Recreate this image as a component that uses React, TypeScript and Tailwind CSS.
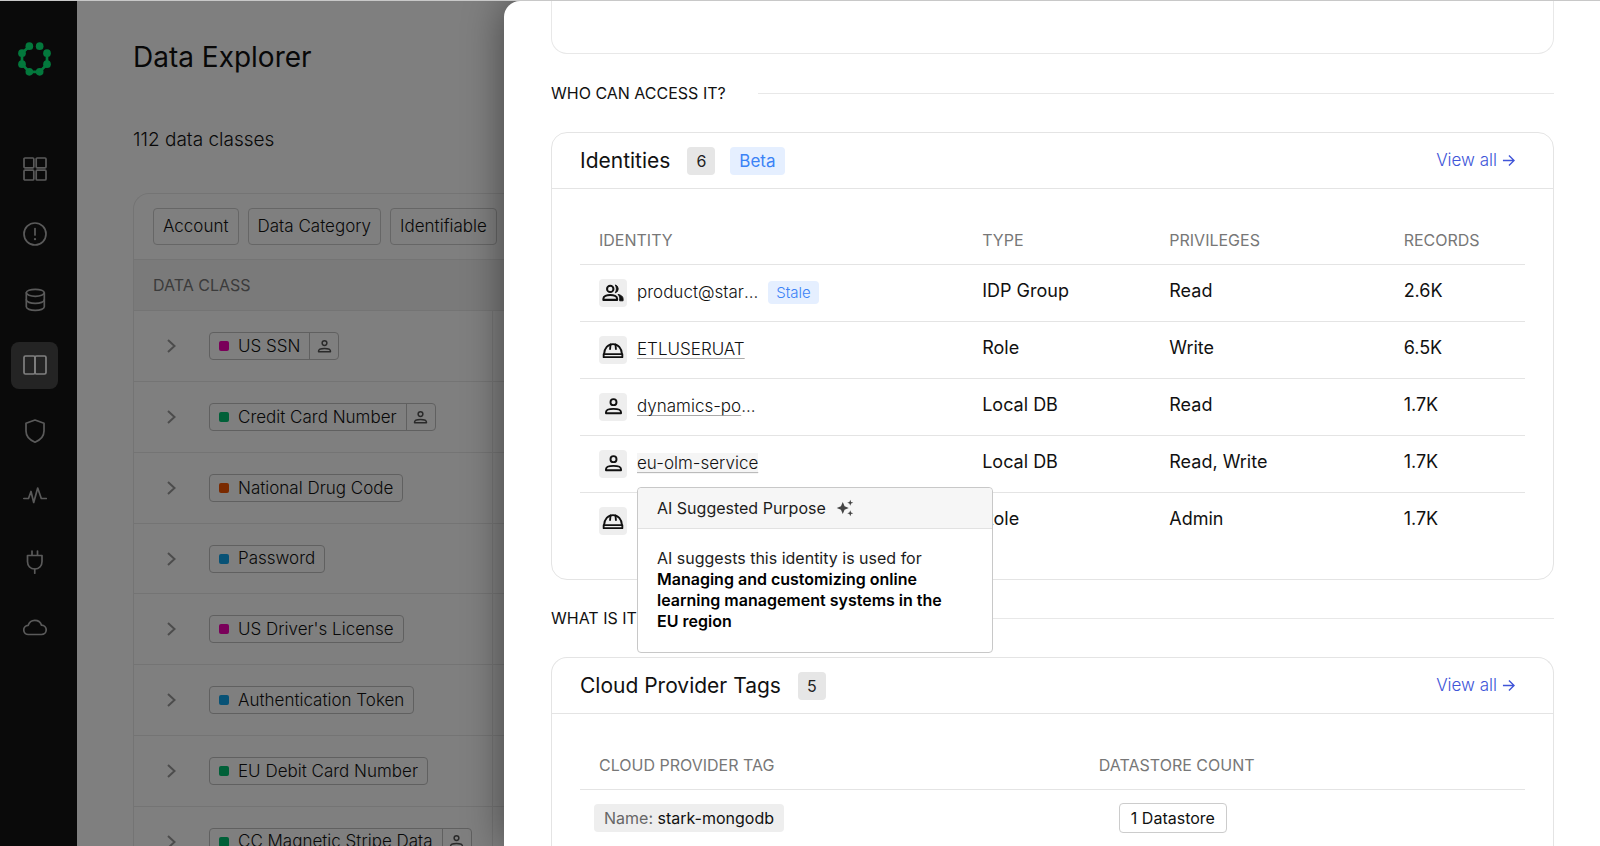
import type { ReactNode } from 'react';

type IdentityKind = 'group' | 'role' | 'user';

interface DataClass {
  name: string;
  color: string;
  personal?: boolean;
}

interface Identity {
  kind: IdentityKind;
  name?: string;
  truncated?: boolean;
  stale?: boolean;
  plain?: boolean;
  active?: boolean;
  type: string;
  privileges: string;
  records: string;
}

const filters = ['Account', 'Data Category', 'Identifiable'];

const dataClasses: DataClass[] = [
  { name: 'US SSN', color: 'bg-[#f400b4]', personal: true },
  { name: 'Credit Card Number', color: 'bg-[#00c070]', personal: true },
  { name: 'National Drug Code', color: 'bg-[#f45400]' },
  { name: 'Password', color: 'bg-[#10a4ec]' },
  { name: "US Driver's License", color: 'bg-[#f400b4]' },
  { name: 'Authentication Token', color: 'bg-[#10a4ec]' },
  { name: 'EU Debit Card Number', color: 'bg-[#00c070]' },
  { name: 'CC Magnetic Stripe Data', color: 'bg-[#00c070]', personal: true },
];

const identities: Identity[] = [
  { kind: 'group', name: 'product@star', truncated: true, plain: true, stale: true, type: 'IDP Group', privileges: 'Read', records: '2.6K' },
  { kind: 'role', name: 'ETLUSERUAT', type: 'Role', privileges: 'Write', records: '6.5K' },
  { kind: 'user', name: 'dynamics-po', truncated: true, type: 'Local DB', privileges: 'Read', records: '1.7K' },
  { kind: 'user', name: 'eu-olm-service', active: true, type: 'Local DB', privileges: 'Read, Write', records: '1.7K' },
  { kind: 'role', type: 'Role', privileges: 'Admin', records: '1.7K' },
];

function Logo() {
  return (
    <svg viewBox="0 0 99 101" className="h-[34px] w-[33px] text-[#06f078]" fill="currentColor">
      <path d="M34 12 12 33V66L34 89H65L87 66V33" fill="none" stroke="currentColor" strokeWidth="8" />
      <circle cx="34" cy="12" r="11.5" />
      <circle cx="65" cy="12" r="11.5" />
      <circle cx="12" cy="33" r="11.5" />
      <circle cx="87" cy="33" r="11.5" />
      <circle cx="12" cy="66" r="11.5" />
      <circle cx="87" cy="66" r="11.5" />
      <circle cx="34" cy="89" r="11.5" />
      <circle cx="65" cy="89" r="11.5" />
    </svg>
  );
}

function NavIcon({ children }: { children: ReactNode }) {
  return (
    <svg
      viewBox="0 0 24 24"
      className="size-6"
      fill="none"
      stroke="currentColor"
      strokeWidth="1.7"
      strokeLinecap="round"
      strokeLinejoin="round"
    >
      {children}
    </svg>
  );
}

const navItems = [
  {
    label: 'Dashboard',
    icon: (
      <NavIcon>
        <rect x="1" y="1" width="9.8" height="9.8" rx="1" />
        <rect x="13.2" y="1" width="9.8" height="9.8" rx="1" />
        <rect x="1" y="13.2" width="9.8" height="9.8" rx="1" />
        <rect x="13.2" y="13.2" width="9.8" height="9.8" rx="1" />
      </NavIcon>
    ),
  },
  {
    label: 'Issues',
    icon: (
      <NavIcon>
        <circle cx="12" cy="12" r="11" />
        <path d="M12 6.5V13" />
        <path d="M12 17v.2" strokeWidth="2.2" />
      </NavIcon>
    ),
  },
  {
    label: 'Data stores',
    icon: (
      <NavIcon>
        <ellipse cx="12.3" cy="4.8" rx="9" ry="3.5" />
        <path d="M3.3 4.8v14c0 2 4 3.6 9 3.6s9-1.6 9-3.6v-14" />
        <path d="M3.3 11.8c0 2 4 3.6 9 3.6s9-1.6 9-3.6" />
      </NavIcon>
    ),
  },
  {
    label: 'Data Explorer',
    active: true,
    icon: (
      <NavIcon>
        <rect x="1" y="3" width="11" height="18" rx="1.5" />
        <rect x="12" y="3" width="11" height="18" rx="1.5" />
      </NavIcon>
    ),
  },
  {
    label: 'Policies',
    icon: (
      <NavIcon>
        <path d="M12 1 21 4.2V12c0 5-3.6 9-9 11.2C6.6 21 3 17 3 12V4.2Z" />
      </NavIcon>
    ),
  },
  {
    label: 'Activity',
    icon: (
      <NavIcon>
        <path d="M.8 14.5h4.7L8 7.5 10.7 18.5 14.7 4 18.3 14.5h5" />
      </NavIcon>
    ),
  },
  {
    label: 'Integrations',
    icon: (
      <NavIcon>
        <path d="M9 1v4.5M14.5 1v4.5M4.5 5.500h14.5v6c0 4.500-3 7.500-7.250 7.500s-7.250-3-7.250-7.500Z" />
        <path d="M11.75 19v4.2" />
      </NavIcon>
    ),
  },
  {
    label: 'Cloud',
    icon: (
      <NavIcon>
        <path d="M5.5 19.5a4.6 4.6 0 0 1-.3-9.2 7 7 0 0 1 13.3-.2 4.7 4.7 0 0 1 0 9.4Z" />
      </NavIcon>
    ),
  },
];

function PersonIcon({ className }: { className: string }) {
  return (
    <svg viewBox="0 0 24 24" className={className} fill="none" stroke="currentColor" strokeWidth="2.4">
      <circle cx="12" cy="6.5" r="3.8" />
      <path d="M2.5 20.5v-1.3c0-2.7 4.700-4.200 9.500-4.200s9.500 1.500 9.500 4.200v1.300Z" strokeLinejoin="round" />
    </svg>
  );
}

function GroupIcon({ className }: { className: string }) {
  return (
    <svg viewBox="0 0 24 24" className={className} fill="none" stroke="currentColor" strokeWidth="2.2">
      <circle cx="9" cy="7.5" r="3.5" />
      <path d="M1.5 19.5v-1.3c0-2.6 3.7-4 7.5-4s7.5 1.4 7.5 4v1.3Z" strokeLinejoin="round" />
      <path d="M14.5 3.2a4.5 4.5 0 0 1 0 8.6c1.6-2.6 1.6-6 0-8.6Z" fill="currentColor" strokeWidth="1" />
      <path d="M17.5 13.5c3 .7 5.5 2 5.5 4.7v2.3h-3.7v-2.3c0-1.900-.6-3.400-1.800-4.700Z" fill="currentColor" strokeWidth="1" />
    </svg>
  );
}

function HelmetIcon({ className }: { className: string }) {
  return (
    <svg
      viewBox="0 0 24 24"
      className={className}
      fill="none"
      stroke="currentColor"
      strokeWidth="2"
      strokeLinejoin="round"
      strokeLinecap="round"
    >
      <path d="M1.8 16.500h20.400v3.300H1.800Z" />
      <path d="M2.2 16.500C2.500 10 6.500 5.500 12 5.500s9.500 4.500 9.800 11" />
      <path d="M9.300 6 8.800 11M14.700 6l.5 5" />
    </svg>
  );
}

function SparkleIcon() {
  return (
    <svg viewBox="0 0 24 24" className="size-[18px] text-[#444]" fill="currentColor">
      <path d="m9 4 2.4 5.6L17 12l-5.6 2.4L9 20l-2.4-5.6L1 12l5.6-2.4Z" />
      <path d="m19 1 1.1 2.9L23 5l-2.9 1.1L19 9l-1.1-2.9L15 5l2.9-1.1ZM19 15l1.1 2.9L23 19l-2.9 1.1L19 23l-1.1-2.9L15 19l2.9-1.1Z" />
    </svg>
  );
}

function KindIcon({ kind }: { kind: IdentityKind }) {
  return (
    <span className="flex size-7 shrink-0 items-center justify-center rounded bg-[#eee] text-[#111]">
      {kind === 'group' && <GroupIcon className="size-[22px]" />}
      {kind === 'role' && <HelmetIcon className="size-[22px]" />}
      {kind === 'user' && <PersonIcon className="size-[19px]" />}
    </span>
  );
}

function Sidebar() {
  return (
    <aside className="flex w-[77px] shrink-0 flex-col bg-[#141414] pr-2">
      <a href="#" aria-label="Home" className="mt-[41px] flex justify-center">
        <Logo />
      </a>
      <nav className="mt-[69px] flex h-[506px] flex-col items-center justify-between">
        {navItems.map((item) => (
          <a
            key={item.label}
            href="#"
            aria-label={item.label}
            className={
              item.active
                ? 'flex size-[47px] items-center justify-center rounded-lg bg-[#484848] text-white'
                : 'flex size-[47px] items-center justify-center rounded-lg text-[#b4b4b4]'
            }
          >
            {item.icon}
          </a>
        ))}
      </nav>
    </aside>
  );
}

function Explorer() {
  return (
    <main className="min-w-0 flex-1 pl-14">
      <h1 className="mt-9 text-[28px] leading-10">Data Explorer</h1>
      <p className="mt-[49px] text-[19px] leading-7 font-light">112 data classes</p>

      <section className="mt-[39px] rounded-tl-2xl border-t border-l border-[#e8e8e8]">
        <div className="flex gap-[9px] px-[19px] pt-[14px] pb-[14px]">
          {filters.map((filter) => (
            <button key={filter} className="h-[37px] rounded border border-[#ccc] px-[9px] text-[17px] font-light">
              {filter}
            </button>
          ))}
        </div>

        <table className="w-full border-collapse text-left">
          <thead>
            <tr className="h-[51px] border-y border-[#e8e8e8] bg-[#f4f4f4]">
              <th colSpan={3} className="pl-[19px] text-base font-normal text-[#777]">
                DATA CLASS
              </th>
            </tr>
          </thead>
          <tbody>
            {dataClasses.map((item) => (
              <tr key={item.name} className="h-[71px] border-b border-[#e8e8e8] nth-[4n]:h-[70px]">
                <td className="w-[75px] pl-8">
                  <button aria-label={`Expand ${item.name}`} className="flex text-[#999]">
                    <svg viewBox="0 0 12 16" className="h-4 w-3" fill="none" stroke="currentColor" strokeWidth="2">
                      <path d="m2 2 6.5 6L2 14" />
                    </svg>
                  </button>
                </td>
                <td className="w-[283px] border-r border-[#e8e8e8]">
                  <span className="inline-flex h-7 items-stretch rounded border border-[#c0c0c0] align-middle">
                    <span className="flex items-center gap-[9px] px-[9px] text-[17px] leading-none font-light whitespace-nowrap">
                      <span className={`size-[10px] rounded-xs ${item.color}`} />
                      {item.name}
                    </span>
                    {item.personal && (
                      <span className="flex w-[29px] items-center justify-center border-l border-[#c0c0c0] text-[#555]">
                        <PersonIcon className="size-[15px]" />
                      </span>
                    )}
                  </span>
                </td>
                <td />
              </tr>
            ))}
          </tbody>
        </table>
      </section>
    </main>
  );
}

function SectionTitle({ children }: { children: ReactNode }) {
  return (
    <div className="flex items-center gap-8">
      <h2 className="text-base leading-6">{children}</h2>
      <div className="h-px flex-1 bg-[#e8e8e8]" />
    </div>
  );
}

function CardHeader({ title, count, beta }: { title: string; count: number; beta?: boolean }) {
  return (
    <header className="flex h-14 items-center border-b border-[#e4e4e4] pr-[38px] pl-7">
      <h3 className="text-[21px]">{title}</h3>
      <span className="ml-[17px] rounded bg-[#e6e6e6] px-[9px] text-base leading-7 text-[#222]">{count}</span>
      {beta && <span className="ml-[15px] rounded bg-[#e5efff] px-[9px] text-[17px] leading-7 text-[#3b82f6]">Beta</span>}
      <a href="#" className="ml-auto flex items-center gap-[5px] text-[17px] font-light text-[#4055d8]">
        View all
        <svg viewBox="0 0 14 14" className="size-[13px]" fill="none" stroke="currentColor" strokeWidth="1.5">
          <path d="M1 7h12M7.5 1.5 13 7l-5.500 5.500" />
        </svg>
      </a>
    </header>
  );
}

function PurposeTooltip() {
  return (
    <div
      role="tooltip"
      className="absolute top-full left-0 z-10 mt-[13px] w-[356px] rounded border border-[#c8c8c8] bg-white text-base leading-[21px] font-normal whitespace-normal text-[#1c1c1c]"
    >
      <div className="flex h-[41px] items-center gap-[10px] rounded-t border-b border-[#e2e2e2] bg-[#f6f6f6] px-[19px]">
        AI Suggested Purpose
        <SparkleIcon />
      </div>
      <p className="pt-[19px] pr-10 pb-5 pl-[19px]">
        AI suggests this identity is used for{' '}
        <strong className="font-semibold text-black">
          Managing and customizing online learning management systems in the EU region
        </strong>
      </p>
    </div>
  );
}

function IdentityName({ identity }: { identity: Identity }) {
  return (
    <span className="relative leading-[21px]">
      <span
        className={
          identity.active
            ? 'inline-block bg-[#f5f5f5] underline decoration-[#bbb] decoration-1 underline-offset-3'
            : identity.plain
              ? 'inline-block'
              : 'inline-block underline decoration-[#aaa] decoration-1 underline-offset-3'
        }
      >
        {identity.name}
      </span>
      {identity.truncated && '...'}
      {identity.active && <PurposeTooltip />}
    </span>
  );
}

function IdentitiesTable() {
  return (
    <table className="w-full table-fixed border-collapse text-left">
      <colgroup>
        <col className="w-[41.5%]" />
        <col className="w-[19.8%]" />
        <col className="w-[24.8%]" />
        <col />
      </colgroup>
      <thead>
        <tr className="h-[50px] border-b border-[#e4e4e4] text-base text-[#777]">
          <th className="pt-[2px] pl-[19px] font-normal">IDENTITY</th>
          <th className="pt-[2px] pl-[10px] font-normal">TYPE</th>
          <th className="pt-[2px] pl-[10px] font-normal">PRIVILEGES</th>
          <th className="pt-[2px] pl-[10px] font-normal">RECORDS</th>
        </tr>
      </thead>
      <tbody>
        {identities.map((identity, index) => (
          <tr key={index} className="h-[57px] border-b border-[#e4e4e4] text-lg last:border-b-0">
            <td className="pl-[19px]">
              <div className="flex items-center gap-[10px] text-[17px] font-light text-[#111]">
                <KindIcon kind={identity.kind} />
                {identity.name && <IdentityName identity={identity} />}
                {identity.stale && (
                  <span className="rounded bg-[#e5efff] px-2 text-[15px] leading-[23px] text-[#3b82f6]">Stale</span>
                )}
              </div>
            </td>
            <td className="pb-1 pl-[10px]">{identity.type}</td>
            <td className="pb-1 pl-[10px]">{identity.privileges}</td>
            <td className="pb-1 pl-[10px]">{identity.records}</td>
          </tr>
        ))}
      </tbody>
    </table>
  );
}

function TagsTable() {
  return (
    <table className="w-full table-fixed border-collapse text-left">
      <thead>
        <tr className="h-[50px] border-b border-[#e4e4e4] text-base text-[#777]">
          <th className="w-[53%] pt-[2px] pl-[19px] font-normal">CLOUD PROVIDER TAG</th>
          <th className="pt-[2px] pl-[18px] font-normal">DATASTORE COUNT</th>
        </tr>
      </thead>
      <tbody>
        <tr className="h-[58px] text-base">
          <td className="pl-[14px]">
            <span className="inline-block rounded bg-[#eee] px-[10px] leading-7 text-[#111]">
              <span className="text-[#666]">Name:</span> stark-mongodb
            </span>
          </td>
          <td className="pl-[38px]">
            <button className="h-[30px] rounded border border-[#ccc] px-[11px]">1 Datastore</button>
          </td>
        </tr>
      </tbody>
    </table>
  );
}

function Drawer() {
  return (
    <div className="absolute inset-0 flex justify-end overflow-hidden bg-black/50">
      <div
        role="dialog"
        aria-label="Data class details"
        className="w-[68.5%] overflow-hidden rounded-tl-2xl bg-white pr-[46px] pl-[47px] shadow-[0_0_40px_rgba(0,0,0,0.45)]"
      >
        <div className="h-[53px] rounded-b-2xl border-x border-b border-[#e8e8e8]" />
        <div className="mt-[27px]">
          <SectionTitle>WHO CAN ACCESS IT?</SectionTitle>
        </div>
        <section className="mt-[27px] rounded-2xl border border-[#e4e4e4]">
          <CardHeader title="Identities" count={6} beta />
          <div className="px-7 pt-[25px] pb-[30px]">
            <IdentitiesTable />
          </div>
        </section>
        <div className="mt-[26px]">
          <SectionTitle>WHAT IS IT?</SectionTitle>
        </div>
        <section className="mt-[27px] rounded-t-2xl border border-b-0 border-[#e4e4e4]">
          <CardHeader title="Cloud Provider Tags" count={5} />
          <div className="px-7 pt-[25px] pb-7">
            <TagsTable />
          </div>
        </section>
      </div>
    </div>
  );
}

export default function App() {
  return (
    <div className="h-screen overflow-hidden border-t border-[#c8c8c8] bg-white font-[Inter,sans-serif] text-[#111]">
      <div className="relative flex h-full overflow-hidden">
        <Sidebar />
        <Explorer />
        <Drawer />
      </div>
    </div>
  );
}
